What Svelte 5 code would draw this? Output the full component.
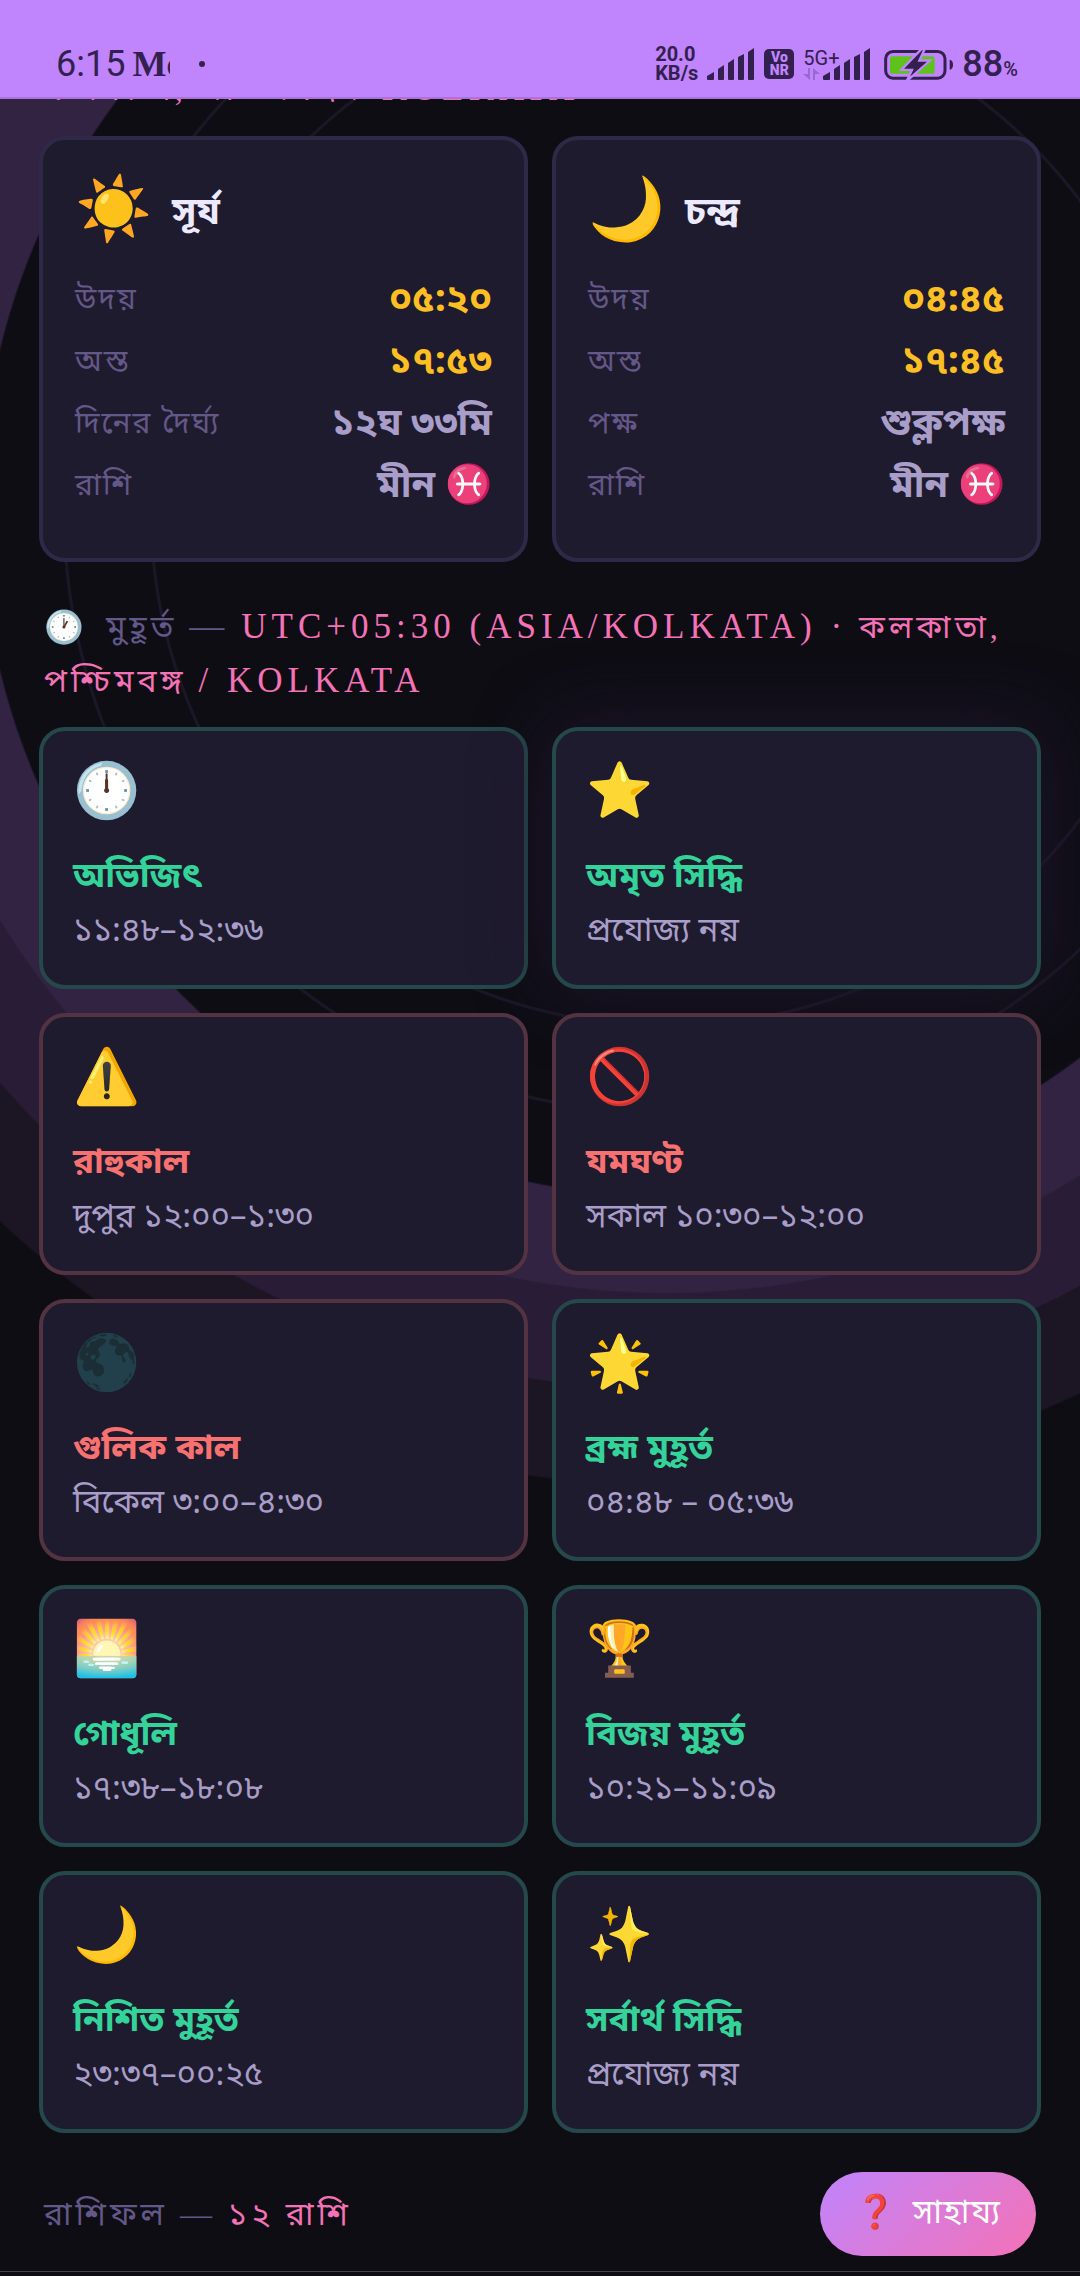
<script lang="ts">
    type Row = { label: string, value: string, tone: string }

    const bodies: { icon: string, name: string, rows: Row[] }[] = [
        {
            icon: '☀️',
            name: 'সূর্য',
            rows: [
                { label: 'উদয়', value: '০৫:২০', tone: 'gold' },
                { label: 'অস্ত', value: '১৭:৫৩', tone: 'gold' },
                { label: 'দিনের দৈর্ঘ্য', value: '১২ঘ ৩৩মি', tone: 'soft' },
                { label: 'রাশি', value: 'মীন ♓', tone: 'soft' },
            ],
        },
        {
            icon: '🌙',
            name: 'চন্দ্র',
            rows: [
                { label: 'উদয়', value: '০৪:৪৫', tone: 'gold' },
                { label: 'অস্ত', value: '১৭:৪৫', tone: 'gold' },
                { label: 'পক্ষ', value: 'শুক্লপক্ষ', tone: 'soft' },
                { label: 'রাশি', value: 'মীন ♓', tone: 'soft' },
            ],
        },
    ]

    const muhurtas = [
        { icon: '🕛', name: 'অভিজিৎ', time: '১১:৪৮–১২:৩৬', good: true },
        { icon: '⭐', name: 'অমৃত সিদ্ধি', time: 'প্রযোজ্য নয়', good: true, glow: true },
        { icon: '⚠️', name: 'রাহুকাল', time: 'দুপুর ১২:০০–১:৩০', good: false },
        { icon: '🚫', name: 'যমঘণ্ট', time: 'সকাল ১০:৩০–১২:০০', good: false },
        { icon: '🌑', name: 'গুলিক কাল', time: 'বিকেল ৩:০০–৪:৩০', good: false },
        { icon: '🌟', name: 'ব্রহ্ম মুহূর্ত', time: '০৪:৪৮ – ০৫:৩৬', good: true },
        { icon: '🌅', name: 'গোধূলি', time: '১৭:৩৮–১৮:০৮', good: true },
        { icon: '🏆', name: 'বিজয় মুহূর্ত', time: '১০:২১–১১:০৯', good: true },
        { icon: '🌙', name: 'নিশিত মুহূর্ত', time: '২৩:৩৭–০০:২৫', good: true },
        { icon: '✨', name: 'সর্বার্থ সিদ্ধি', time: 'প্রযোজ্য নয়', good: true },
    ]
</script>

{#snippet signal()}
    <svg class="signal" viewBox="0 0 48 32" aria-hidden="true">
        <path d="M0 31V28L7 24V31Q7 32 6 32H1Q0 32 0 31Z" />
        <path d="M11 31V21L17 17V31Q17 32 16 32H12Q11 32 11 31Z" />
        <path d="M21 31V15L27 11V31Q27 32 26 32H22Q21 32 21 31Z" />
        <path d="M31 31V9L37 6V31Q37 32 36 32H32Q31 32 31 31Z" />
        <path d="M41 31V4L47 0V31Q47 32 46 32H42Q41 32 41 31Z" />
    </svg>
{/snippet}

<div class="page">
    <header class="status">
        <div class="left">
            <span class="clock">6:15</span>
            <span class="carrier">Mc</span>
            <span class="dot"></span>
        </div>
        <div class="right">
            <div class="speed"><span>20.0</span><span>KB/s</span></div>
            {@render signal()}
            <div class="vonr"><span>Vo</span><span>NR</span></div>
            <div class="network">
                <div class="gen">
                    <span>5G+</span>
                    <svg viewBox="0 0 17 12" aria-hidden="true">
                        <path d="M5 0H7V12L0 6H5ZM10 12H12V6H17L10 0Z" />
                    </svg>
                </div>
                {@render signal()}
            </div>
            <div class="power">
                <svg class="battery" viewBox="0 0 210 92" aria-hidden="true">
                    <rect x="5" y="7" width="178" height="80" rx="22" fill="none" stroke="#33204f" stroke-width="9" />
                    <rect x="18" y="21" width="134" height="53" rx="8" fill="#5fc21c" />
                    <path d="M197 32Q207 34 207 47T197 62Z" fill="#33204f" />
                    <path d="M112 0L52 62H84L68 96L138 34H106L122 0Z" fill="#33204f" stroke="#c084fc" stroke-width="7" />
                </svg>
                <span class="percent">88<small>%</small></span>
            </div>
        </div>
    </header>

    <main>
        <div class="scrolled">
            <p class="section-title"><span class="pink">কলকাতা, পশ্চিমবঙ্গ <span class="latin">/ KOLKATA</span></span></p>
        </div>

        <section class="grid">
            {#each bodies as body}
                <article class="card body">
                    <h2><span class="big">{body.icon}</span>{body.name}</h2>
                    <dl>
                        {#each body.rows as row}
                            <div class="row">
                                <dt>{row.label}</dt>
                                <dd class={row.tone}>{row.value}</dd>
                            </div>
                        {/each}
                    </dl>
                </article>
            {/each}
        </section>

        <h3 class="section-title muhurta-title">
            <span class="title-icon">🕐</span> মুহূর্ত <span class="latin">—</span>
            <span class="pink">
                <span class="latin">UTC+05:30 (ASIA/KOLKATA) ·</span> কলকাতা, পশ্চিমবঙ্গ <span class="latin">/ KOLKATA</span>
            </span>
        </h3>

        <section class="grid">
            {#each muhurtas as m}
                <article class="card muhurta" class:good={m.good} class:bad={!m.good} class:glow={m.glow}>
                    <span class="icon">{m.icon}</span>
                    <h4>{m.name}</h4>
                    <p>{m.time}</p>
                </article>
            {/each}
        </section>

        <div class="footer">
            <h3 class="section-title">রাশিফল — <span class="pink">১২ রাশি</span></h3>
            <button class="help"><span>❓</span>সাহায্য</button>
        </div>
    </main>
    <div class="next"></div>
</div>

<style>
    :global(body) {
        background: #0e0d14;
    }

    .page {
        font-family: "Noto Sans Bengali", "Noto Sans", sans-serif;
        color: #ede9fe;
        background:
            radial-gradient(circle at 667px 510px,
                transparent 514px, #1b1726 515px, #1b1726 517px, transparent 518px,
                transparent 601px, #1b1726 602px, #1b1726 604px, transparent 605px,
                transparent 685px, #322342 687px, #322342 782px,
                #281c36 784px, #281c36 878px,
                #1c1524 880px, #1c1524 974px, transparent 976px),
            #0e0d14;
    }

    h2, h3, h4, p, dl, dd {
        margin: 0;
    }

    .status {
        display: flex;
        justify-content: space-between;
        box-sizing: border-box;
        height: 99px;
        padding: 43px 62px 0 56px;
        background: #c084fc;
        border-bottom: 2px solid #a874dc;
        color: #33204f;
        font-family: Roboto, sans-serif;
    }

    .left, .right, .network, .power {
        display: flex;
        align-items: center;
        height: 42px;
    }

    .right {
        gap: 9px;
    }

    .clock {
        font-size: 36px;
    }

    .carrier {
        width: 38px;
        margin-left: 7px;
        overflow: hidden;
        font-family: "Liberation Serif", serif;
        font-size: 36px;
        font-weight: 700;
    }

    .dot {
        width: 6px;
        height: 6px;
        margin-left: 29px;
        border-radius: 50%;
        background: #33204f;
    }

    .speed {
        display: flex;
        flex-direction: column;
        font-size: 20px;
        line-height: 19px;
        font-weight: 700;
    }

    .signal {
        width: 48px;
        height: 32px;
        fill: #33204f;
    }

    .vonr {
        display: flex;
        flex-direction: column;
        align-items: center;
        justify-content: center;
        width: 30px;
        height: 30px;
        border-radius: 5px;
        background: #33204f;
        color: #c084fc;
        font-size: 14px;
        line-height: 13px;
        font-weight: 900;
    }

    .gen {
        display: flex;
        flex-direction: column;
        width: 20px;
        font-size: 20px;
        line-height: 20px;
    }

    .gen span {
        white-space: nowrap;
    }

    .gen svg {
        width: 17px;
        height: 12px;
        fill: #9a68cf;
    }

    .power {
        gap: 8px;
        margin-left: 4px;
    }

    .battery {
        width: 70px;
        height: 31px;
    }

    .percent {
        font-size: 36px;
        font-weight: 500;
    }

    .percent small {
        font-size: 20px;
    }

    main {
        padding: 0 39px;
    }

    .scrolled {
        display: flex;
        align-items: flex-end;
        height: 17px;
        margin-bottom: 20px;
        overflow: hidden;
    }

    .section-title {
        padding: 0 5px;
        font-family: "Liberation Serif", "Noto Sans Bengali", serif;
        font-size: 32px;
        font-weight: 400;
        line-height: 54px;
        letter-spacing: 4px;
        color: #635888;
    }

    .title-icon {
        margin-right: 6px;
    }

    .pink {
        color: #f472b6;
    }

    .latin {
        font-size: 35px;
        line-height: 32px;
        letter-spacing: 5px;
    }

    .muhurta-title {
        margin: 38px 0 19px;
    }

    .grid {
        display: grid;
        grid-template-columns: 1fr 1fr;
        gap: 24px;
    }

    .card {
        box-sizing: border-box;
        padding: 32px;
        border: 4px solid #2e2947;
        border-radius: 26px;
        background: #1f1b2e;
    }

    .body {
        padding: 36px 32px 40px;
    }

    .body h2 {
        display: flex;
        align-items: center;
        gap: 20px;
        height: 76px;
        margin-bottom: 18px;
        font-size: 38px;
    }

    .big {
        font-size: 62px;
        font-weight: 400;
        line-height: 76px;
    }

    .row {
        display: flex;
        align-items: center;
        justify-content: space-between;
        height: 62px;
    }

    dt {
        font-size: 30px;
        letter-spacing: 2px;
        color: #635888;
    }

    dd {
        font-size: 38px;
        font-weight: 700;
    }

    .gold {
        color: #fbbf24;
    }

    .soft {
        color: #a89ec9;
    }

    .muhurta {
        height: 262px;
        padding: 28px 30px;
    }

    .icon {
        display: block;
        font-size: 54px;
        line-height: 72px;
    }

    .muhurta h4 {
        margin-top: 20px;
        font-size: 35px;
        line-height: 54px;
    }

    .muhurta p {
        font-size: 33px;
        line-height: 56px;
        color: #a89ec9;
    }

    .good {
        border-color: #25484a;
    }

    .good h4 {
        color: #34d399;
    }

    .bad {
        border-color: #533341;
    }

    .bad h4 {
        color: #f87171;
    }

    .glow {
        box-shadow: 0 0 72px #1f172f;
    }

    .footer {
        display: flex;
        align-items: center;
        justify-content: space-between;
        padding: 39px 5px 15px 0;
    }

    .help {
        display: flex;
        align-items: center;
        gap: 16px;
        height: 84px;
        padding: 0 35px;
        border: none;
        border-radius: 42px;
        background: linear-gradient(135deg, #c084fc, #f472b6);
        color: #fff;
        font-family: "Noto Sans Bengali", "Noto Sans", sans-serif;
        font-size: 33px;
        letter-spacing: 1px;
        cursor: pointer;
    }

    .next {
        height: 4px;
        border-top: 1px solid #45434c;
    }
</style>
